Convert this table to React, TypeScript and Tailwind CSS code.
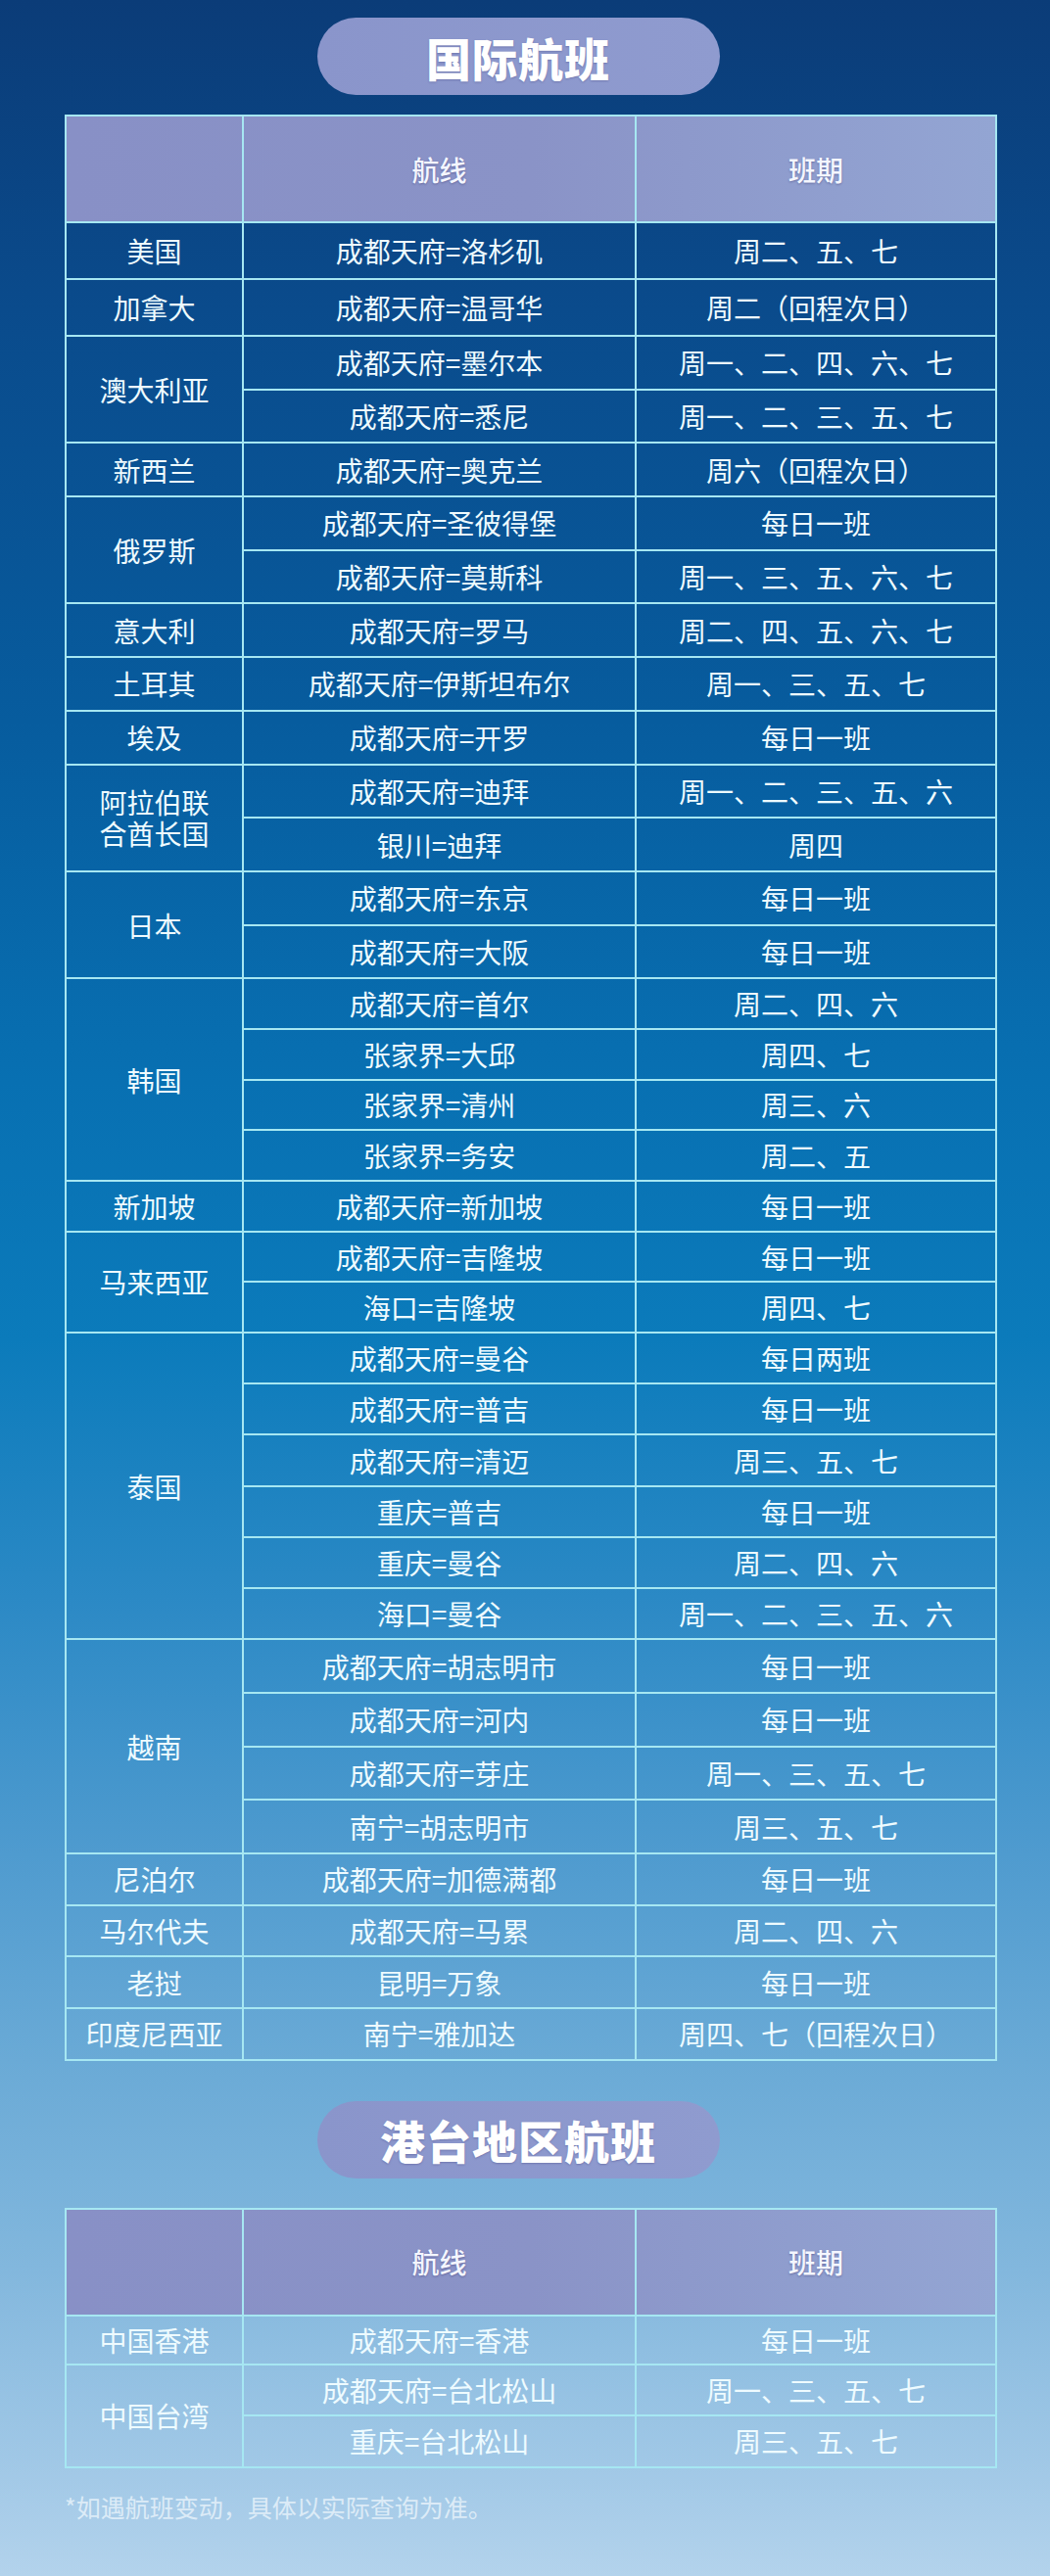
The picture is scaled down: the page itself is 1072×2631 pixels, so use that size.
import React from 'react';

type Group = {
  country: React.ReactNode;
  rows: [string, string][];
  h: string; // row height class
};

const intl: Group[] = [
  { country: '美国', rows: [['成都天府=洛杉矶', '周二、五、七']], h: 'h-[58px]' },
  { country: '加拿大', rows: [['成都天府=温哥华', '周二（回程次日）']], h: 'h-[58px]' },
  {
    country: '澳大利亚',
    rows: [
      ['成都天府=墨尔本', '周一、二、四、六、七'],
      ['成都天府=悉尼', '周一、二、三、五、七'],
    ],
    h: 'h-[54.7px]',
  },
  { country: '新西兰', rows: [['成都天府=奥克兰', '周六（回程次日）']], h: 'h-[54.7px]' },
  {
    country: '俄罗斯',
    rows: [
      ['成都天府=圣彼得堡', '每日一班'],
      ['成都天府=莫斯科', '周一、三、五、六、七'],
    ],
    h: 'h-[54.7px]',
  },
  { country: '意大利', rows: [['成都天府=罗马', '周二、四、五、六、七']], h: 'h-[54.7px]' },
  { country: '土耳其', rows: [['成都天府=伊斯坦布尔', '周一、三、五、七']], h: 'h-[54.7px]' },
  { country: '埃及', rows: [['成都天府=开罗', '每日一班']], h: 'h-[54.7px]' },
  {
    country: (
      <>
        阿拉伯联
        <br />
        合酋长国
      </>
    ),
    rows: [
      ['成都天府=迪拜', '周一、二、三、五、六'],
      ['银川=迪拜', '周四'],
    ],
    h: 'h-[54.7px]',
  },
  {
    country: '日本',
    rows: [
      ['成都天府=东京', '每日一班'],
      ['成都天府=大阪', '每日一班'],
    ],
    h: 'h-[54.7px]',
  },
  {
    country: '韩国',
    rows: [
      ['成都天府=首尔', '周二、四、六'],
      ['张家界=大邱', '周四、七'],
      ['张家界=清州', '周三、六'],
      ['张家界=务安', '周二、五'],
    ],
    h: 'h-[51.7px]',
  },
  { country: '新加坡', rows: [['成都天府=新加坡', '每日一班']], h: 'h-[51.7px]' },
  {
    country: '马来西亚',
    rows: [
      ['成都天府=吉隆坡', '每日一班'],
      ['海口=吉隆坡', '周四、七'],
    ],
    h: 'h-[51.7px]',
  },
  {
    country: '泰国',
    rows: [
      ['成都天府=曼谷', '每日两班'],
      ['成都天府=普吉', '每日一班'],
      ['成都天府=清迈', '周三、五、七'],
      ['重庆=普吉', '每日一班'],
      ['重庆=曼谷', '周二、四、六'],
      ['海口=曼谷', '周一、二、三、五、六'],
    ],
    h: 'h-[52.2px]',
  },
  {
    country: '越南',
    rows: [
      ['成都天府=胡志明市', '每日一班'],
      ['成都天府=河内', '每日一班'],
      ['成都天府=芽庄', '周一、三、五、七'],
      ['南宁=胡志明市', '周三、五、七'],
    ],
    h: 'h-[54.7px]',
  },
  { country: '尼泊尔', rows: [['成都天府=加德满都', '每日一班']], h: 'h-[52.7px]' },
  { country: '马尔代夫', rows: [['成都天府=马累', '周二、四、六']], h: 'h-[52.7px]' },
  { country: '老挝', rows: [['昆明=万象', '每日一班']], h: 'h-[52.7px]' },
  { country: '印度尼西亚', rows: [['南宁=雅加达', '周四、七（回程次日）']], h: 'h-[52.7px]' },
];

const hkTw: Group[] = [
  { country: '中国香港', rows: [['成都天府=香港', '每日一班']], h: 'h-[50px]' },
  {
    country: '中国台湾',
    rows: [
      ['成都天府=台北松山', '周一、三、五、七'],
      ['重庆=台北松山', '周三、五、七'],
    ],
    h: 'h-[52.5px]',
  },
];

const cell = 'border-2 border-[#a6e7f2] text-center align-middle p-0';

function Pill({ children }: { children: React.ReactNode }) {
  return (
    <div className="mx-auto -translate-x-[7px] w-[411px] h-[79px] rounded-full bg-gradient-to-r from-[#8a95cb] to-[#8f9bcf] flex items-center justify-center">
      <span className="text-[46px] leading-none font-black text-white tracking-[1px] [text-shadow:0_1px_2px_rgba(60,60,120,0.35)]">
        {children}
      </span>
    </div>
  );
}

function FlightTable({ groups }: { groups: Group[] }) {
  return (
    <table className="w-[950px] ml-[66px] border-collapse table-fixed text-[28px] leading-[32px] text-[#eefbff]">
      <colgroup>
        <col className="w-[181px]" />
        <col className="w-[401px]" />
        <col className="w-[368px]" />
      </colgroup>
      <thead>
        <tr className="h-[109px] bg-gradient-to-r from-[#8890c6] via-[#8a93c7] to-[#93a5d3]">
          <th className={cell}></th>
          <th className={`${cell} font-medium text-[#f4f6ff] [text-shadow:0_1px_2px_rgba(50,50,110,0.45)]`}>航线</th>
          <th className={`${cell} font-medium text-[#f4f6ff] [text-shadow:0_1px_2px_rgba(50,50,110,0.45)]`}>班期</th>
        </tr>
      </thead>
      <tbody>
        {groups.map((g, gi) =>
          g.rows.map(([route, sched], ri) => (
            <tr key={`${gi}-${ri}`} className={g.h}>
              {ri === 0 && (
                <td rowSpan={g.rows.length} className={cell}>
                  {g.country}
                </td>
              )}
              <td className={cell}>{route}</td>
              <td className={cell}>{sched}</td>
            </tr>
          ))
        )}
      </tbody>
    </table>
  );
}

export default function App() {
  return (
    <div className="w-[1072px] h-[2631px] overflow-hidden font-['Noto_Sans_CJK_SC','Noto_Sans',sans-serif] bg-[linear-gradient(to_bottom,#0b3c78_0%,#0a4b8c_12%,#075c9e_28%,#0870b2_42%,#0b7bbb_52%,#2b89c5_62%,#4f9bcf_72%,#6aaad6_80%,#82b7dd_88%,#a6cbe8_97%,#b3d3ec_100%)]">
      <div className="pt-[18px]">
        <Pill>国际航班</Pill>
      </div>
      <div className="mt-[20px]">
        <FlightTable groups={intl} />
      </div>
      <div className="mt-[41px]">
        <Pill>港台地区航班</Pill>
      </div>
      <div className="mt-[30px]">
        <FlightTable groups={hkTw} />
      </div>
      <p className="mt-[23px] pl-[66px] text-[25px] leading-[32px] text-[#dcebf7]">
        *如遇航班变动，具体以实际查询为准。
      </p>
    </div>
  );
}
